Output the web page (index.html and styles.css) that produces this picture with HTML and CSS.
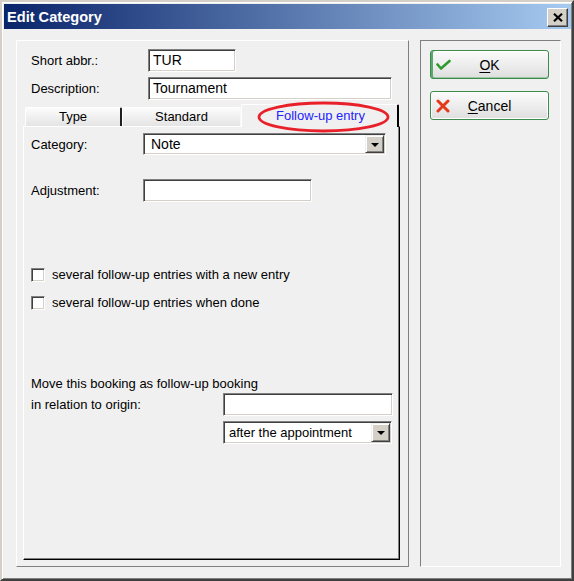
FILE: index.html
```html
<!DOCTYPE html>
<html>
<head>
<meta charset="utf-8">
<link rel="stylesheet" href="styles.css">
</head>
<body>
<div class="window">
  <div class="titlebar">
    <span class="title">Edit Category</span>
    <span class="close-btn">
      <svg width="10" height="9" viewBox="0 0 10 9"><path d="M1 0.8 L9 8.2 M9 0.8 L1 8.2" stroke="#000" stroke-width="2.2"/></svg>
    </span>
  </div>
  <div class="content">
    <div class="group group-left">
      <div class="field-row">
        <span class="lbl lbl-top">Short abbr.:</span>
        <div class="input input-abbr">TUR</div>
      </div>
      <div class="field-row row2">
        <span class="lbl lbl-top">Description:</span>
        <div class="input input-desc">Tournament</div>
      </div>
      <div class="tabs">
        <div class="tab tab-type">Type</div>
        <div class="tab tab-std">Standard</div>
        <div class="tab tab-sel">
          <span class="tab-sel-text">Follow-up entry</span>
          <svg class="ellipse" width="133" height="32" viewBox="0 0 133 32"><ellipse cx="66.5" cy="16" rx="64.5" ry="14" fill="none" stroke="#e8202a" stroke-width="2.8"/></svg>
        </div>
      </div>
      <div class="panel">
        <div class="prow cat-row">
          <span class="lbl lbl-cat">Category:</span>
          <div class="select select-cat">
            <span class="select-text">Note</span>
            <span class="select-btn"><span class="arrow"></span></span>
          </div>
        </div>
        <div class="prow adj-row">
          <span class="lbl lbl-cat">Adjustment:</span>
          <div class="input input-adj"></div>
        </div>
        <div class="check-row check1">
          <span class="checkbox"></span>
          <span>several follow-up entries with a new entry</span>
        </div>
        <div class="check-row check2">
          <span class="checkbox"></span>
          <span>several follow-up entries when done</span>
        </div>
        <div class="move-text">Move this booking as follow-up booking</div>
        <div class="prow rel-row">
          <span class="lbl lbl-rel">in relation to origin:</span>
          <div class="input input-rel"></div>
        </div>
        <div class="select select-after">
          <span class="select-text">after the appointment</span>
          <span class="select-btn"><span class="arrow"></span></span>
        </div>
      </div>
    </div>
    <div class="group group-right">
      <div class="btn btn-ok">
        <svg class="btn-icon" width="15" height="12" viewBox="0 0 15 12"><path d="M1.5 5.5 L5 9.5 L13.5 2" fill="none" stroke="#2f9a2f" stroke-width="2.6" stroke-linecap="round" stroke-linejoin="round"/></svg>
        <span class="btn-text"><u>O</u>K</span>
      </div>
      <div class="btn btn-cancel">
        <svg class="btn-icon" width="14" height="14" viewBox="0 0 14 14"><path d="M2 2 L12 12 M12 2 L2 12" fill="none" stroke="#e53a1a" stroke-width="3" stroke-linecap="round"/></svg>
        <span class="btn-text"><u>C</u>ancel</span>
      </div>
    </div>
  </div>
</div>
</body>
</html>
```
FILE: styles.css
```css
* { box-sizing: border-box; }
html, body { margin: 0; padding: 0; }
body {
  font-family: "Liberation Sans", Arial, sans-serif;
  font-size: 13px;
  color: #000;
  background: #fff;
}
.window {
  width: 574px;
  height: 581px;
  background: #f0f0f0;
  border-style: solid;
  border-width: 2px;
  border-color: #d4d0c8 #404040 #404040 #d4d0c8;
  box-shadow: inset 1px 1px 0 #fff, inset -1px -1px 0 #808080;
  padding: 2px 1px 0 2px;
  display: flex;
  flex-direction: column;
  overflow: hidden;
}
.titlebar {
  height: 25px;
  flex: none;
  background: linear-gradient(to right, #0a246a, #a6caf0);
  display: flex;
  align-items: center;
  justify-content: space-between;
  padding: 0 3px 0 3px;
}
.title {
  color: #fff;
  font-weight: bold;
  font-size: 14.6px;
}
.close-btn {
  width: 21px;
  height: 19px;
  background: #d4d0c8;
  border-style: solid;
  border-width: 1px;
  border-color: #fff #404040 #404040 #fff;
  box-shadow: inset -1px -1px 0 #808080;
  display: flex;
  align-items: center;
  justify-content: center;
  margin-top: 1px;
}
.content {
  display: flex;
  padding: 11px 0 0 12px;
  gap: 11px;
}
.group {
  height: 527px;
  border: 1px solid;
}
.group-left {
  width: 393px;
  border-color: #fff #808080 #808080 #fff;
  padding-top: 8px;
}
.group-right {
  width: 141px;
  border-color: #808080 #fff #fff #808080;
  padding: 9px 0 0 9px;
  display: flex;
  flex-direction: column;
  gap: 12px;
}
.field-row {
  display: flex;
  align-items: center;
  height: 23px;
  padding-left: 14px;
}
.row2 { margin-top: 5px; }
.lbl-top { width: 117px; }
.input {
  height: 23px;
  background: #fff;
  border-style: solid;
  border-width: 1px;
  border-color: #808080 #fff #fff #808080;
  box-shadow: inset 1px 1px 0 #404040, inset -1px -1px 0 #d4d0c8;
  padding: 2px 0 0 4px;
  line-height: 16px;
  font-size: 14px;
}
.input-abbr { width: 88px; }
.input-desc { width: 244px; }
.tabs {
  margin-top: 4px;
  height: 22px;
  padding-left: 8px;
  display: flex;
  align-items: flex-end;
}
.tab {
  height: 19px;
  text-align: center;
  line-height: 18px;
  font-size: 13px;
  background: linear-gradient(#fcfcfc, #e4e4e4);
  border-style: solid;
  border-width: 1px 2px 0 1px;
  border-color: #fff #202020 #fff #fff;
  border-radius: 2px 2px 0 0;
}
.tab-type { width: 97px; }
.tab-std { width: 119px; border-right-color: #f8f8f8; border-right-width: 1px; }
.tab-sel {
  width: 158px;
  height: 23px;
  margin-bottom: -1px;
  position: relative;
  z-index: 1;
  background: #f0f0f0;
  border-color: #fff #000 #f0f0f0 #fff;
  line-height: 22px;
}
.tab-sel-text {
  color: #2323ff;
  display: inline-block;
  padding-left: 2px;
}
.ellipse {
  position: absolute;
  left: 15px;
  top: -4px;
}
.panel {
  margin-left: 6px;
  width: 377px;
  height: 434px;
  border-style: solid;
  border-width: 1px;
  border-color: #fff #000 #000 #fff;
  box-shadow: inset -1px -1px 0 #808080;
  padding: 6px 0 0 7px;
}
.prow {
  display: flex;
  align-items: center;
}
.lbl-cat { width: 112px; }
.cat-row { height: 22px; }
.adj-row { height: 23px; margin-top: 24px; }
.input-adj { width: 169px; }
.select {
  height: 22px;
  background: #fff;
  display: flex;
  border-style: solid;
  border-width: 1px;
  border-color: #808080 #fff #fff #808080;
  box-shadow: inset 1px 1px 0 #404040, inset -1px -1px 0 #d4d0c8;
  padding: 1px;
}
.select-cat { width: 243px; }
.select-text {
  flex: 1;
  padding-left: 6px;
  line-height: 18px;
  font-size: 13px;
}
.select-cat .select-text { font-size: 14px; }
.select-btn {
  width: 19px;
  height: 18px;
  background: #d4d0c8;
  border-style: solid;
  border-width: 1px;
  border-color: #f0f0f0 #404040 #404040 #f0f0f0;
  box-shadow: inset 1px 1px 0 #fff, inset -1px -1px 0 #808080;
  display: flex;
  align-items: center;
  justify-content: center;
}
.arrow {
  width: 0;
  height: 0;
  border-left: 4px solid transparent;
  border-right: 4px solid transparent;
  border-top: 4px solid #000;
  margin-top: 1px;
}
.check-row {
  display: flex;
  align-items: center;
  height: 17px;
  gap: 7px;
}
.check1 { margin-top: 64px; }
.check2 { margin-top: 11px; }
.checkbox {
  width: 14px;
  height: 14px;
  background: #fff;
  border-style: solid;
  border-width: 1px;
  border-color: #808080 #fff #fff #808080;
  box-shadow: inset 1px 1px 0 #404040, inset -1px -1px 0 #d4d0c8;
}
.move-text {
  margin-top: 65px;
  line-height: 15px;
}
.rel-row { margin-top: 2px; height: 23px; }
.lbl-rel { width: 192px; }
.input-rel { width: 170px; }
.select-after {
  width: 169px;
  height: 23px;
  margin: 5px 0 0 192px;
}
.select-after .select-text { line-height: 19px; padding-left: 4px; }
.select-after .select-btn { height: 19px; }
.btn {
  width: 119px;
  height: 29px;
  border: 1px solid #3c8a4c;
  border-radius: 3px;
  background: linear-gradient(#fbfbfb, #ececec 55%, #dedede);
  box-shadow: inset 0 0 0 1px #fff;
  display: grid;
  grid-template-columns: 22px 1fr 22px;
  align-items: center;
}
.btn-ok {
  box-shadow: inset 2px 0 0 #5aa86a, inset 0 -1px 0 #9cc8a4, inset 0 1px 0 #fff;
}
.btn-icon { justify-self: center; margin-left: 2px; }
.btn-text {
  text-align: center;
  font-size: 14px;
}
u { text-underline-offset: 2px; }
```
